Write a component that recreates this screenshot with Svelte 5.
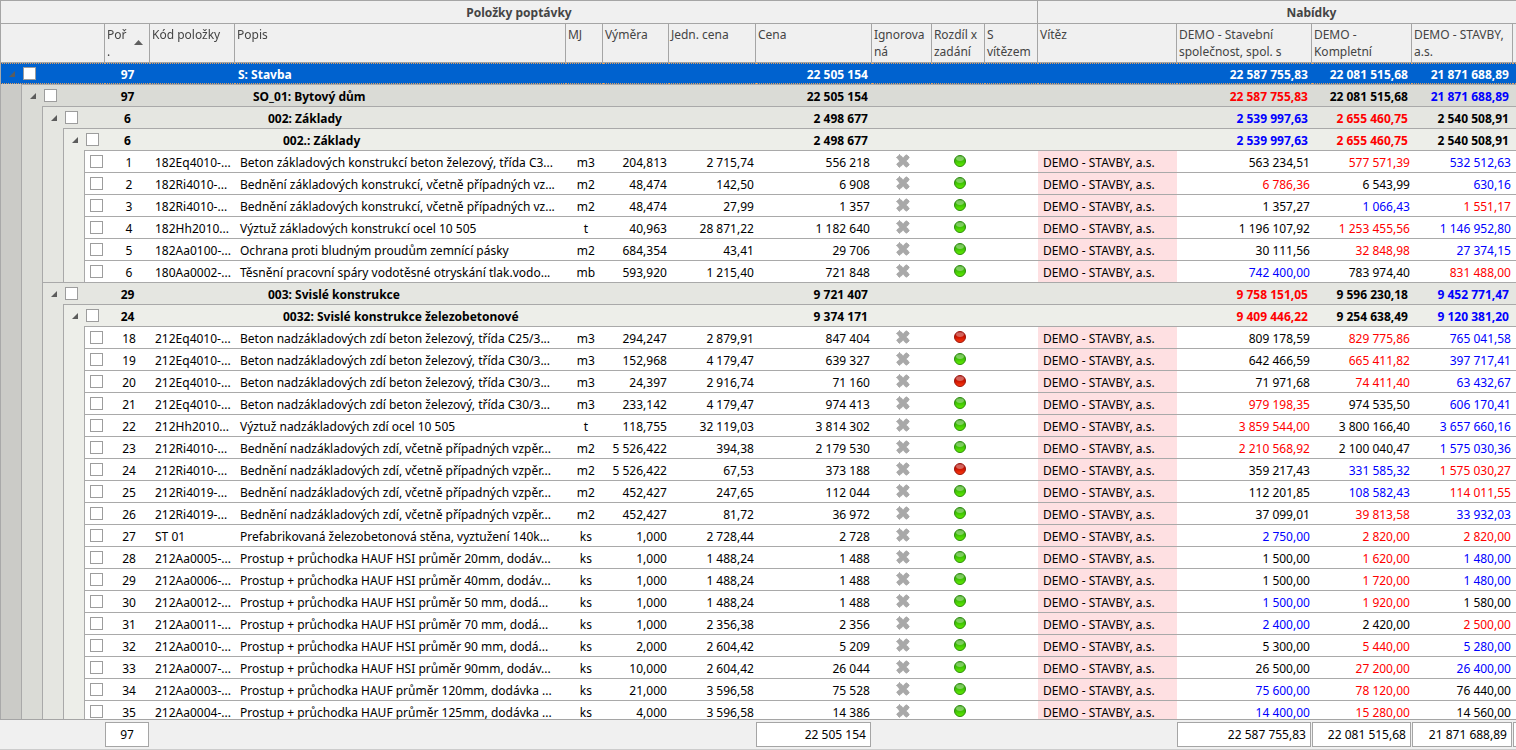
<script>
  // Row colour codes for the three bids: k = black, r = red (highest), b = blue (lowest)
  const groups = {
    stavba: { level: 0, count: 97, name: 'S: Stavba', price: '22 505 154', bids: ['22 587 755,83', '22 081 515,68', '21 871 688,89'], colors: 'www' },
    dum: { level: 1, count: 97, name: 'SO_01: Bytový dům', price: '22 505 154', bids: ['22 587 755,83', '22 081 515,68', '21 871 688,89'], colors: 'rkb' },
    g002: { level: 2, count: 6, name: '002: Základy', price: '2 498 677', bids: ['2 539 997,63', '2 655 460,75', '2 540 508,91'], colors: 'brk' },
    g0020: { level: 3, count: 6, name: '002.: Základy', price: '2 498 677', bids: ['2 539 997,63', '2 655 460,75', '2 540 508,91'], colors: 'brk' },
    g003: { level: 2, count: 29, name: '003: Svislé konstrukce', price: '9 721 407', bids: ['9 758 151,05', '9 596 230,18', '9 452 771,47'], colors: 'rkb' },
    g0032: { level: 3, count: 24, name: '0032: Svislé konstrukce železobetonové', price: '9 374 171', bids: ['9 409 446,22', '9 254 638,49', '9 120 381,20'], colors: 'rkb' }
  };

  function item(no, code, name, unit, qty, unitPrice, price, bids, colors, differs = false) {
    return { level: 4, no, code, name, unit, qty, unitPrice, price, bids, colors, differs };
  }

  const rows = [
    groups.stavba,
    groups.dum,
    groups.g002,
    groups.g0020,
    item(1, '182Eq4010-...', 'Beton základových konstrukcí beton železový, třída C3...', 'm3', '204,813', '2 715,74', '556 218', ['563 234,51', '577 571,39', '532 512,63'], 'krb'),
    item(2, '182Ri4010-...', 'Bednění základových konstrukcí, včetně případných vz...', 'm2', '48,474', '142,50', '6 908', ['6 786,36', '6 543,99', '630,16'], 'rkb'),
    item(3, '182Ri4010-...', 'Bednění základových konstrukcí, včetně případných vz...', 'm2', '48,474', '27,99', '1 357', ['1 357,27', '1 066,43', '1 551,17'], 'kbr'),
    item(4, '182Hh2010...', 'Výztuž základových konstrukcí ocel 10 505', 't', '40,963', '28 871,22', '1 182 640', ['1 196 107,92', '1 253 455,56', '1 146 952,80'], 'krb'),
    item(5, '182Aa0100-...', 'Ochrana proti bludným proudům zemnící pásky', 'm2', '684,354', '43,41', '29 706', ['30 111,56', '32 848,98', '27 374,15'], 'krb'),
    item(6, '180Aa0002-...', 'Těsnění pracovní spáry vodotěsné otryskání tlak.vodo...', 'mb', '593,920', '1 215,40', '721 848', ['742 400,00', '783 974,40', '831 488,00'], 'bkr'),
    groups.g003,
    groups.g0032,
    item(18, '212Eq4010-...', 'Beton nadzákladových zdí beton železový, třída C25/3...', 'm3', '294,247', '2 879,91', '847 404', ['809 178,59', '829 775,86', '765 041,58'], 'krb', true),
    item(19, '212Eq4010-...', 'Beton nadzákladových zdí beton železový, třída C30/3...', 'm3', '152,968', '4 179,47', '639 327', ['642 466,59', '665 411,82', '397 717,41'], 'krb'),
    item(20, '212Eq4010-...', 'Beton nadzákladových zdí beton železový, třída C30/3...', 'm3', '24,397', '2 916,74', '71 160', ['71 971,68', '74 411,40', '63 432,67'], 'krb', true),
    item(21, '212Eq4010-...', 'Beton nadzákladových zdí beton železový, třída C30/3...', 'm3', '233,142', '4 179,47', '974 413', ['979 198,35', '974 535,50', '606 170,41'], 'rkb'),
    item(22, '212Hh2010...', 'Výztuž nadzákladových zdí ocel 10 505', 't', '118,755', '32 119,03', '3 814 302', ['3 859 544,00', '3 800 166,40', '3 657 660,16'], 'rkb'),
    item(23, '212Ri4010-...', 'Bednění nadzákladových zdí, včetně případných vzpěr...', 'm2', '5 526,422', '394,38', '2 179 530', ['2 210 568,92', '2 100 040,47', '1 575 030,36'], 'rkb'),
    item(24, '212Ri4010-...', 'Bednění nadzákladových zdí, včetně případných vzpěr...', 'm2', '5 526,422', '67,53', '373 188', ['359 217,43', '331 585,32', '1 575 030,27'], 'kbr', true),
    item(25, '212Ri4019-...', 'Bednění nadzákladových zdí, včetně případných vzpěr...', 'm2', '452,427', '247,65', '112 044', ['112 201,85', '108 582,43', '114 011,55'], 'kbr'),
    item(26, '212Ri4019-...', 'Bednění nadzákladových zdí, včetně případných vzpěr...', 'm2', '452,427', '81,72', '36 972', ['37 099,01', '39 813,58', '33 932,03'], 'krb'),
    item(27, 'ST 01', 'Prefabrikovaná železobetonová stěna, vyztužení 140k...', 'ks', '1,000', '2 728,44', '2 728', ['2 750,00', '2 820,00', '2 820,00'], 'brr'),
    item(28, '212Aa0005-...', 'Prostup + průchodka HAUF HSI průměr 20mm, dodáv...', 'ks', '1,000', '1 488,24', '1 488', ['1 500,00', '1 620,00', '1 480,00'], 'krb'),
    item(29, '212Aa0006-...', 'Prostup + průchodka HAUF HSI průměr 40mm, dodáv...', 'ks', '1,000', '1 488,24', '1 488', ['1 500,00', '1 720,00', '1 480,00'], 'krb'),
    item(30, '212Aa0012-...', 'Prostup + průchodka HAUF HSI průměr 50 mm, dodá...', 'ks', '1,000', '1 488,24', '1 488', ['1 500,00', '1 920,00', '1 580,00'], 'brk'),
    item(31, '212Aa0011-...', 'Prostup + průchodka HAUF HSI průměr 70 mm, dodá...', 'ks', '1,000', '2 356,38', '2 356', ['2 400,00', '2 420,00', '2 500,00'], 'bkr'),
    item(32, '212Aa0010-...', 'Prostup + průchodka HAUF HSI průměr 90 mm, dodá...', 'ks', '2,000', '2 604,42', '5 209', ['5 300,00', '5 440,00', '5 280,00'], 'krb'),
    item(33, '212Aa0007-...', 'Prostup + průchodka HAUF HSI průměr 90mm, dodáv...', 'ks', '10,000', '2 604,42', '26 044', ['26 500,00', '27 200,00', '26 400,00'], 'krb'),
    item(34, '212Aa0003-...', 'Prostup + průchodka HAUF průměr 120mm, dodávka ...', 'ks', '21,000', '3 596,58', '75 528', ['75 600,00', '78 120,00', '76 440,00'], 'brk'),
    item(35, '212Aa0004-...', 'Prostup + průchodka HAUF průměr 125mm, dodávka ...', 'ks', '4,000', '3 596,58', '14 386', ['14 400,00', '15 280,00', '14 560,00'], 'brk')
  ];

  const winner = 'DEMO - STAVBY, a.s.';
  const totals = ['22 587 755,83', '22 081 515,68', '21 871 688,89'];

  let collapsed = $state({});

  // Hide everything nested below a collapsed group
  let visibleRows = $derived.by(() => {
    const out = [];
    let limit = Infinity;
    rows.forEach((row, i) => {
      if (row.level > limit) return;
      limit = collapsed[i] ? row.level : Infinity;
      out.push({ ...row, id: i });
    });
    return out;
  });

  function toggle(id) {
    collapsed[id] = !collapsed[id];
  }
</script>

<svg class="defs" aria-hidden="true">
  <defs>
    <linearGradient id="ball-green" x1="0" y1="0" x2="0" y2="1">
      <stop offset="0" stop-color="#2f9a0c" />
      <stop offset="0.5" stop-color="#3fc205" />
      <stop offset="1" stop-color="#62f000" />
    </linearGradient>
    <linearGradient id="ball-red" x1="0" y1="0" x2="0" y2="1">
      <stop offset="0" stop-color="#a80c0c" />
      <stop offset="0.5" stop-color="#cc1400" />
      <stop offset="1" stop-color="#ff3a10" />
    </linearGradient>
  </defs>
</svg>

<div class="grid">
  <table>
    <colgroup>
      <col class="c-tree" />
      <col class="c-no" />
      <col class="c-code" />
      <col />
      <col class="c-unit" />
      <col class="c-qty" />
      <col class="c-unit-price" />
      <col class="c-price" />
      <col class="c-ignored" />
      <col class="c-flag" />
      <col class="c-flag" />
      <col class="c-winner" />
      <col class="c-bid1" />
      <col class="c-bid2" />
      <col class="c-bid3" />
      <col class="c-rest" />
    </colgroup>

    <thead>
      <tr class="bands">
        <th class="first" colspan="11">Položky poptávky</th>
        <th colspan="5">Nabídky</th>
      </tr>
      <tr class="columns">
        <th class="first"></th>
        <th>
          <button class="sort">
            <span>Poř<br />.</span>
            <svg width="9" height="5" viewBox="0 0 9 5" aria-hidden="true"><path d="M4.5 0 9 5H0z" fill="#5f5f5f" /></svg>
          </button>
        </th>
        <th>Kód položky</th>
        <th>Popis</th>
        <th>MJ</th>
        <th>Výměra</th>
        <th>Jedn. cena</th>
        <th>Cena</th>
        <th>Ignorova<br />ná</th>
        <th>Rozdíl x<br />zadání</th>
        <th>S<br />vítězem</th>
        <th>Vítěz</th>
        <th>DEMO - Stavební<br />společnost, spol. s</th>
        <th>DEMO -<br />Kompletní</th>
        <th>DEMO - STAVBY,<br />a.s.</th>
        <th></th>
      </tr>
    </thead>

    <tbody>
      {#each visibleRows as row (row.id)}
        <tr class="level{row.level}">
          <td class="tree">
            <div class="tree-line">
              {#each { length: row.level } as _, depth}
                <span class="gutter gutter{depth}"></span>
              {/each}
              <span class="node">
                {#if row.level < 4}
                  <button class="expander" aria-label={row.name} aria-expanded={!collapsed[row.id]} onclick={() => toggle(row.id)}>
                    <svg width="6" height="6" viewBox="0 0 6 6" aria-hidden="true"><path d="M6 0V6H0z" fill="#5c5c5c" /></svg>
                  </button>
                {/if}
                <input type="checkbox" aria-label={row.name} />
              </span>
            </div>
          </td>
          <td class="no">{row.count ?? row.no}</td>
          {#if row.level < 4}
            <td></td>
            <td class="name">{row.name}</td>
            <td></td>
            <td></td>
            <td></td>
            <td class="num">{row.price}</td>
            <td></td>
            <td></td>
            <td></td>
            <td></td>
          {:else}
            <td class="text">{row.code}</td>
            <td class="text">{row.name}</td>
            <td class="unit">{row.unit}</td>
            <td class="num">{row.qty}</td>
            <td class="num">{row.unitPrice}</td>
            <td class="num">{row.price}</td>
            <td class="icon">
              <svg width="14" height="14" viewBox="0 0 14 14" aria-hidden="true">
                <path d="M3.5 0.5 7 3.7 10.5 0.5 13.5 3.5 10.3 7 13.5 10.5 10.5 13.5 7 10.3 3.5 13.5 0.5 10.5 3.7 7 0.5 3.5z" fill="#a9a9a9" stroke="#9d9d9d" stroke-dasharray="1 1" />
              </svg>
            </td>
            <td class="icon">
              <svg width="12" height="12" viewBox="0 0 12 12" aria-hidden="true">
                <circle cx="6" cy="6" r="5.5" fill="url(#ball-{row.differs ? 'red' : 'green'})" stroke={row.differs ? '#99170e' : '#2d8a10'} />
                <ellipse cx="6" cy="3.6" rx="3.9" ry="2.4" fill="#fff" fill-opacity="0.35" />
              </svg>
            </td>
            <td></td>
            <td class="text winner">{winner}</td>
          {/if}
          {#each row.bids as bid, i}
            <td class="num {row.colors[i]}">{bid}</td>
          {/each}
          <td></td>
        </tr>
      {/each}
    </tbody>

    <tfoot>
      <tr>
        <td></td>
        <td><div class="total center">97</div></td>
        <td colspan="5"></td>
        <td><div class="total">22 505 154</div></td>
        <td colspan="4"></td>
        {#each totals as total}
          <td><div class="total">{total}</div></td>
        {/each}
        <td><div class="total"></div></td>
      </tr>
    </tfoot>
  </table>
</div>

<style>
  :global(body) {
    margin: 0;
    background: #f0f0f0;
  }

  .defs {
    position: absolute;
    width: 0;
    height: 0;
  }

  .grid {
    height: 100vh;
    overflow: auto;
    scrollbar-width: none;
    background: #f0f0f0;
    font-family: 'Noto Sans', 'Open Sans', sans-serif;
    font-size: 12px;
    color: #000;
  }

  /* The last bid column runs past the right edge of the window */
  table {
    width: calc(100% + 70px);
    min-width: 1386px;
    table-layout: fixed;
    border-collapse: separate;
    border-spacing: 0;
  }

  .c-tree { width: 105px; }
  .c-no { width: 45px; }
  .c-code { width: 85px; }
  .c-unit { width: 37px; }
  .c-qty { width: 66px; }
  .c-unit-price { width: 87px; }
  .c-price { width: 116px; }
  .c-ignored { width: 60px; }
  .c-flag { width: 53px; }
  .c-winner { width: 139px; }
  .c-bid1 { width: 135px; }
  .c-bid2 { width: 100px; }
  .c-bid3 { width: 101px; }
  .c-rest { width: 73px; }

  td,
  th {
    box-sizing: border-box;
    padding: 0;
    overflow: hidden;
    white-space: nowrap;
  }

  /* Header */
  thead {
    position: sticky;
    top: 0;
    z-index: 1;
  }

  th {
    background: #f0f0f0;
    color: #444;
    border-right: 1px solid #a5a5a5;
    border-bottom: 1px solid #a5a5a5;
  }

  th.first {
    border-left: 1px solid #a5a5a5;
  }

  .bands th {
    height: 24px;
    padding-top: 2px;
    border-top: 1px solid #a5a5a5;
    font-weight: bold;
    line-height: 20px;
    text-align: center;
  }

  .columns th {
    height: 39px;
    padding: 2px 0 2px 2px;
    font-weight: normal;
    line-height: 17px;
    text-align: left;
    vertical-align: top;
  }

  .sort {
    display: flex;
    align-items: center;
    justify-content: space-between;
    width: 100%;
    padding: 0 6px 0 0;
    border: 0;
    background: none;
    font: inherit;
    color: inherit;
    text-align: left;
  }

  .sort svg {
    margin-bottom: 2px;
  }

  /* Rows */
  tbody td {
    height: 22px;
    padding-top: 2px;
    border-top: 1px solid #a9a9a9;
    background: #fff;
    line-height: 19px;
  }

  tbody .tree {
    padding-top: 0;
    border-top: 0;
  }

  .tree-line {
    display: flex;
    height: 22px;
  }

  .gutter {
    box-sizing: border-box;
    flex: none;
    width: 21px;
    border-left: 1px solid #a9a9a9;
  }

  .gutter0 { background: #cbcbc7; }
  .gutter1 { background: #dadbd6; }
  .gutter2 { background: #e5e6e1; }
  .gutter3 { background: #edeee9; }

  .node {
    box-sizing: border-box;
    flex: 1;
    display: flex;
    align-items: center;
    padding-left: 5px;
    border-top: 1px solid #a9a9a9;
    border-left: 1px solid #a9a9a9;
  }

  .expander {
    display: flex;
    justify-content: center;
    width: 12px;
    margin-right: 5px;
    padding: 4px 0;
    border: 0;
    background: none;
  }

  input {
    appearance: none;
    box-sizing: border-box;
    width: 13px;
    height: 13px;
    margin: 0;
    border: 1px solid #9d9d9d;
    background: #fff;
  }

  input:checked {
    background: #0062cf;
    box-shadow: inset 0 0 0 2px #fff;
  }

  .level0 td,
  .level1 td,
  .level2 td,
  .level3 td {
    font-weight: bold;
  }

  .level0 td {
    height: 21px;
    border-top: 1px dotted #e0a060;
    border-bottom: 1px dotted #e0a060;
    background: #0062cf;
    color: #fff;
    line-height: 17px;
  }

  .level0 .tree-line {
    height: 19px;
  }

  .level0 .node {
    border-top: 0;
  }

  .level1 td { background: #dadbd6; }
  .level2 td { background: #e5e6e1; }
  .level3 td { background: #edeee9; }

  .no {
    text-align: center;
  }

  .level4 .no {
    padding-left: 3px;
  }

  .level0 .name { padding-left: 3px; }
  .level1 .name { padding-left: 18px; }
  .level2 .name { padding-left: 33px; }
  .level3 .name { padding-left: 48px; }

  .text {
    padding-left: 5px;
  }

  .unit {
    padding-left: 3px;
    text-align: center;
  }

  .num {
    padding-right: 4px;
    text-align: right;
  }

  .level4 .num {
    padding-right: 2px;
  }

  .level4 .icon {
    padding: 0 0 2px 3px;
    text-align: center;
  }

  .icon svg {
    display: block;
    margin: 0 auto;
  }

  .level4 .winner {
    background: #fee0e2;
  }

  .r { color: #f00; }
  .b { color: #00f; }

  /* Summary */
  tfoot {
    position: sticky;
    bottom: 0;
    z-index: 1;
  }

  tfoot td {
    height: 31px;
    padding: 2px 1px 2px 0;
    border-top: 1px solid #a5a5a5;
    border-bottom: 1px solid #ccc;
    background: #f0f0f0;
  }

  .total {
    box-sizing: border-box;
    height: 25px;
    padding: 1px 4px 0;
    border: 1px solid #a5a5a5;
    background: #fff;
    line-height: 22px;
    text-align: right;
  }

  .center {
    text-align: center;
  }
</style>
